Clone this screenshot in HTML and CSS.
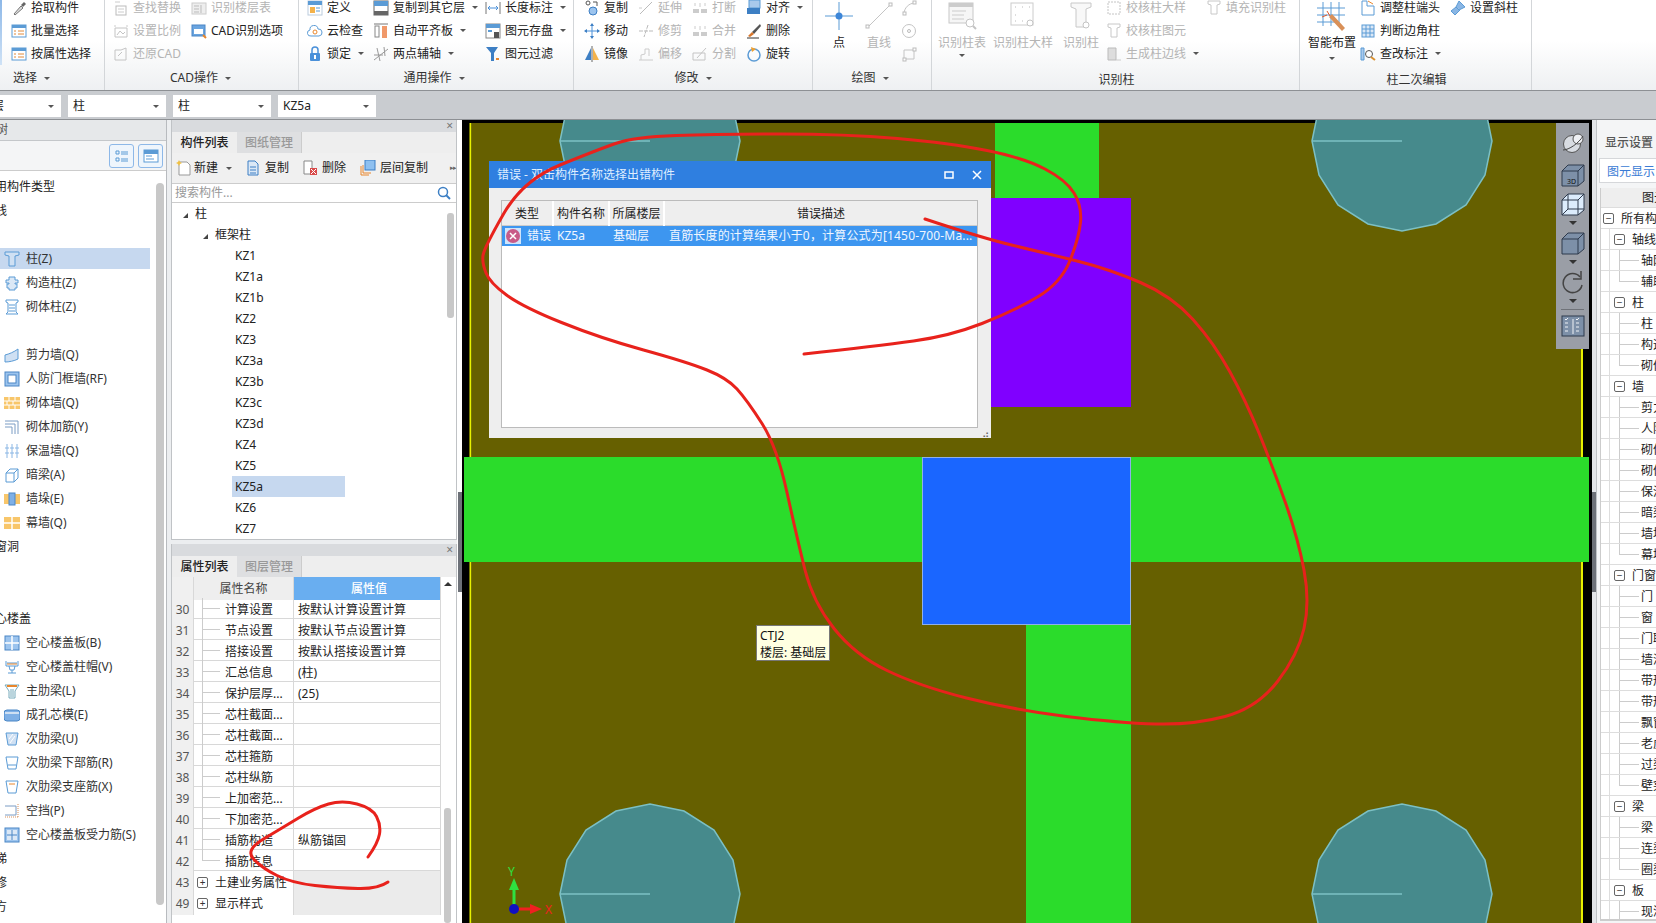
FILE: index.html
```html
<!DOCTYPE html>
<html lang="zh-CN">
<head>
    <meta charset="UTF-8">
    <title>构件错误</title>
    <link rel="stylesheet" href="styles.css">
</head>
<body>

<svg class="defs" width="0" height="0">
    <symbol id="i-list" viewBox="0 0 16 16"><rect x="1" y="2" width="14" height="12" fill="#fff" stroke="#5b9bd5"/><rect x="1" y="2" width="14" height="3" fill="#5b9bd5"/><path d="M3 8h2M7 8h6M3 11h2M7 11h6" stroke="#e08a3c"/></symbol>
    <symbol id="i-pick" viewBox="0 0 16 16"><path d="M3 14 10 6l2 2-8 7z" fill="#ddd" stroke="#777"/><path d="M10 5l3-3 2 2-3 3z" fill="#666"/></symbol>
    <symbol id="i-gfind" viewBox="0 0 16 16"><rect x="3" y="6" width="10" height="9" fill="none" stroke="#bbb"/><path d="M5 9h6M5 12h6M2 2h5" stroke="#ccc"/></symbol>
    <symbol id="i-gscale" viewBox="0 0 16 16"><path d="M2 14V5h12v9zM4 12l3-4 3 3 2-2" fill="none" stroke="#c4c4c4"/><path d="M2 2v2M14 2v2" stroke="#ccc"/></symbol>
    <symbol id="i-grestore" viewBox="0 0 16 16"><path d="M2 14V4h6l5-2v12z" fill="none" stroke="#c4c4c4"/><path d="M5 10l4-4" stroke="#c4c4c4"/></symbol>
    <symbol id="i-gfloor" viewBox="0 0 16 16"><rect x="1" y="3" width="14" height="11" fill="#eee" stroke="#ccc"/><path d="M3 6h5M3 9h5M3 12h5M10 5v8" stroke="#bbb"/></symbol>
    <symbol id="i-cad" viewBox="0 0 16 16"><rect x="1" y="2" width="13" height="11" fill="#6aa5e0" stroke="#4a86c5"/><rect x="3" y="6" width="9" height="5" fill="#fff"/><path d="M12 12l3 3" stroke="#e8862c" stroke-width="2"/></symbol>
    <symbol id="i-define" viewBox="0 0 16 16"><rect x="1" y="1" width="14" height="14" fill="#fff" stroke="#bcd"/><rect x="1" y="1" width="14" height="4" fill="#5b9bd5"/><rect x="3" y="7" width="5" height="6" fill="#f4b24a"/><path d="M9 8h4M9 11h4" stroke="#5b9bd5"/></symbol>
    <symbol id="i-cloud" viewBox="0 0 16 16"><path d="M4 13a3 3 0 0 1-1-6 4 4 0 0 1 8-1 3.500 3.500 0 0 1 1 7z" fill="#fff" stroke="#5b9bd5"/><circle cx="8" cy="9" r="2" fill="none" stroke="#e8862c"/></symbol>
    <symbol id="i-lock" viewBox="0 0 16 16"><rect x="3" y="7" width="10" height="8" rx="1" fill="#4a90d9"/><path d="M5 7V4a3 3 0 0 1 6 0v3" fill="none" stroke="#4a90d9" stroke-width="1.500"/><rect x="7" y="9" width="2" height="4" fill="#fff"/></symbol>
    <symbol id="i-copyto" viewBox="0 0 16 16"><rect x="1" y="1" width="14" height="14" fill="#fff" stroke="#666"/><rect x="1" y="1" width="14" height="5" fill="#5b9bd5"/><rect x="1" y="11" width="14" height="4" fill="#666"/></symbol>
    <symbol id="i-align" viewBox="0 0 16 16"><path d="M1 1h14" stroke="#777"/><rect x="2" y="3" width="4" height="11" fill="#fff" stroke="#888"/><rect x="9" y="3" width="5" height="12" fill="#f0996a"/></symbol>
    <symbol id="i-axis" viewBox="0 0 16 16"><path d="M1 14 15 3M4 2l3 13M11 1l1 9M1 9h9" fill="none" stroke="#999"/></symbol>
    <symbol id="i-length" viewBox="0 0 16 16"><path d="M1 2v12M15 2v12" stroke="#777"/><path d="M3 8h10M3 8l2-2M3 8l2 2M13 8l-2-2M13 8l-2 2" stroke="#4a90d9" fill="none"/></symbol>
    <symbol id="i-store" viewBox="0 0 16 16"><rect x="1" y="1" width="14" height="14" fill="#fff" stroke="#888"/><rect x="1" y="1" width="14" height="4" fill="#5b9bd5"/><rect x="3" y="7" width="4" height="2" fill="#5b9bd5"/><rect x="9" y="9" width="5" height="6" fill="#555"/></symbol>
    <symbol id="i-filter" viewBox="0 0 16 16"><path d="M1 1h12L9 7v8H6V7z" fill="#3d7fc4"/><path d="M11 13h3" stroke="#e8862c" stroke-width="2"/></symbol>
    <symbol id="i-copy" viewBox="0 0 16 16"><circle cx="4" cy="3" r="2" fill="none" stroke="#555"/><circle cx="9" cy="11" r="4" fill="#9cc4ee" stroke="#3d7fc4"/><path d="M9 2h4v4" fill="none" stroke="#555"/></symbol>
    <symbol id="i-move" viewBox="0 0 16 16"><path d="M8 1v14M1 8h14" stroke="#4a90d9"/><path d="M8 0l-2 3h4zM8 16l-2-3h4zM0 8l3-2v4zM16 8l-3-2v4z" fill="#3d7fc4"/></symbol>
    <symbol id="i-mirror" viewBox="0 0 16 16"><path d="M1 14 7 2v12z" fill="#3d7fc4"/><path d="M9 2l6 12H9z" fill="#f4b24a"/><path d="M8 0v16" stroke="#666"/></symbol>
    <symbol id="i-gext" viewBox="0 0 16 16"><path d="M2 14 14 2" stroke="#bbb"/><path d="M1 8h3" stroke="#ccc"/></symbol>
    <symbol id="i-gtrim" viewBox="0 0 16 16"><path d="M1 8h14M10 2 6 14" stroke="#bbb" stroke-dasharray="4 1"/></symbol>
    <symbol id="i-goff" viewBox="0 0 16 16"><path d="M1 14h14M3 14V9l4-1V3h4v7" fill="none" stroke="#ccc"/></symbol>
    <symbol id="i-gbreak" viewBox="0 0 16 16"><rect x="1" y="9" width="6" height="4" fill="#ccc"/><rect x="9" y="9" width="6" height="4" fill="#ccc"/><path d="M3 3v3M13 3v3M8 3v4" stroke="#ccc"/></symbol>
    <symbol id="i-gsplit" viewBox="0 0 16 16"><path d="M1 14V7h12v7zM5 12 14 2" fill="none" stroke="#c4c4c4"/></symbol>
    <symbol id="i-alignr" viewBox="0 0 16 16"><rect x="3" y="0" width="11" height="8" fill="#a9c9ec" stroke="#5b9bd5"/><rect x="1" y="8" width="13" height="6" fill="#3d7fc4"/></symbol>
    <symbol id="i-del" viewBox="0 0 16 16"><path d="M14 1 6 9l2 2 7-8z" fill="#555"/><path d="M6 9 2 13l2 1 4-3z" fill="#d8772c"/><path d="M1 15h12" stroke="#333"/></symbol>
    <symbol id="i-rotate" viewBox="0 0 16 16"><circle cx="8" cy="9" r="6" fill="none" stroke="#5b9bd5" stroke-width="1.500"/><path d="M5 1l5 2-4 3z" fill="#f0a030"/></symbol>
    <symbol id="i-point" viewBox="0 0 32 32"><path d="M16 2v28M2 16h28" stroke="#5b9bd5"/><circle cx="16" cy="16" r="3.500" fill="#3d86d8"/></symbol>
    <symbol id="i-line" viewBox="0 0 32 32"><path d="M5 27 27 5" stroke="#c4c4c4"/><rect x="3" y="25" width="3" height="3" fill="#fff" stroke="#bbb"/><rect x="26" y="3" width="3" height="3" fill="#fff" stroke="#bbb"/></symbol>
    <symbol id="i-garc" viewBox="0 0 16 16"><path d="M3 14C3 8 8 3 14 3" fill="none" stroke="#c4c4c4"/><rect x="2" y="12" width="3" height="3" fill="#fff" stroke="#bbb"/><rect x="12" y="1" width="3" height="3" fill="#fff" stroke="#bbb"/></symbol>
    <symbol id="i-gcircle" viewBox="0 0 16 16"><circle cx="8" cy="8" r="6.500" fill="none" stroke="#c4c4c4"/><circle cx="8" cy="8" r="1.500" fill="none" stroke="#bbb"/></symbol>
    <symbol id="i-grect" viewBox="0 0 16 16"><path d="M3 4h10v9H3z" fill="none" stroke="#c4c4c4"/><rect x="12" y="2" width="3" height="3" fill="#fff" stroke="#bbb"/><rect x="2" y="12" width="3" height="3" fill="#fff" stroke="#bbb"/></symbol>
    <symbol id="i-rtable" viewBox="0 0 32 32"><rect x="3" y="3" width="24" height="20" fill="#f6f6f6" stroke="#c8c8c8"/><rect x="3" y="3" width="24" height="4" fill="#ccc"/><path d="M6 11h14M6 15h12M6 19h12" stroke="#ccc"/><circle cx="24" cy="23" r="4" fill="#fff" stroke="#c4c4c4"/><path d="M27 26l3 3" stroke="#c4c4c4" stroke-width="2"/></symbol>
    <symbol id="i-rdetail" viewBox="0 0 32 32"><rect x="4" y="3" width="22" height="22" fill="none" stroke="#ccc"/><path d="M8 7h1M15 7h1M22 7h1M8 15h1M8 21h1M15 21h1" stroke="#bbb"/><circle cx="23" cy="23" r="3" fill="#fff" stroke="#c4c4c4"/></symbol>
    <symbol id="i-rcol" viewBox="0 0 32 32"><path d="M6 3h20v4l-5 2v18H11V9L6 7z" fill="#f8f8f8" stroke="#c8c8c8"/><circle cx="21" cy="25" r="3" fill="#fff" stroke="#c4c4c4"/></symbol>
    <symbol id="i-gcol" viewBox="0 0 16 16"><path d="M2 1h12v3l-3 1v9H5V5L2 4z" fill="none" stroke="#c8c8c8"/></symbol>
    <symbol id="i-gdash" viewBox="0 0 16 16"><rect x="2" y="2" width="12" height="12" fill="none" stroke="#c4c4c4" stroke-dasharray="2 1"/></symbol>
    <symbol id="i-gedge" viewBox="0 0 16 16"><path d="M2 2h8v12H2z" fill="#ddd" stroke="#bbb"/><path d="M10 14h5" stroke="#ccc"/></symbol>
    <symbol id="i-smart" viewBox="0 0 32 32"><path d="M7 2v24M15 2v24M23 2v24M1 8h28M1 15h28M1 22h20" stroke="#5b9bd5"/><path d="M16 14l13 14-3 3L13 17z" fill="#d99058"/><path d="M11 11l3 5M6 17l5-2" stroke="#e05a2c"/></symbol>
    <symbol id="i-adjust" viewBox="0 0 16 16"><path d="M2 1v14h12V6H7V1z" fill="#fff" stroke="#5b9bd5"/><path d="M8 1l5 3" stroke="#e8862c"/></symbol>
    <symbol id="i-corner" viewBox="0 0 16 16"><rect x="2" y="2" width="12" height="12" fill="#dbe8f6" stroke="#5b9bd5"/><path d="M6 2v12M10 2v12M2 6h12M2 10h12" stroke="#5b9bd5"/></symbol>
    <symbol id="i-edit" viewBox="0 0 16 16"><path d="M1 2h3v12H1z" fill="#a9c9ec" stroke="#5b9bd5"/><circle cx="9" cy="8" r="3.500" fill="#fff" stroke="#555"/><path d="M11 11l4 3" stroke="#d99030" stroke-width="2"/></symbol>
    <symbol id="i-slant" viewBox="0 0 16 16"><path d="M9 1l6 6-6 3-3-3zM6 7l-5 4 4 4 5-5" fill="#8ab6e4" stroke="#5b9bd5"/></symbol>
    <symbol id="i-col" viewBox="0 0 16 16"><path d="M1 1h14v3l-4 1v10H5V5L1 4z" fill="#cfe0f3" stroke="#5b9bd5"/></symbol>
    <symbol id="i-gz" viewBox="0 0 16 16"><path d="M5 2h6v3h3v3h-3v1h2v4h-2v2H5v-2H3V9h2V8H2V5h3z" fill="#dbe8f6" stroke="#5b9bd5"/></symbol>
    <symbol id="i-mcol" viewBox="0 0 16 16"><path d="M2 1h12v2l-2 1v9l2 2H2l2-2V4L2 3z" fill="#fff" stroke="#5b9bd5"/><path d="M5 6h6M5 9h6M5 12h6" stroke="#5b9bd5"/></symbol>
    <symbol id="i-shear" viewBox="0 0 16 16"><path d="M1 8c4-1 9-3 13-6v10c-4 2-9 3-13 3z" fill="#cfe0f3" stroke="#5b9bd5"/></symbol>
    <symbol id="i-door" viewBox="0 0 16 16"><rect x="1" y="1" width="14" height="14" fill="#9cc4ee" stroke="#4a86c5"/><rect x="4" y="4" width="8" height="8" fill="#fff" stroke="#4a86c5"/></symbol>
    <symbol id="i-brick" viewBox="0 0 16 16"><rect x="0" y="2" width="16" height="12" fill="#f8c66a"/><path d="M0 6h16M0 10h16M5 2v4M11 2v4M3 6v4M9 6v4M5 10v4M11 10v4" stroke="#fff"/></symbol>
    <symbol id="i-rebar" viewBox="0 0 16 16"><path d="M1 2h13v13M1 5h10v10M1 8h7v7" fill="none" stroke="#7a9cc4"/></symbol>
    <symbol id="i-insu" viewBox="0 0 16 16"><path d="M3 1v14M8 1v14M13 1v14M1 5h4M6 5h4M11 5h4M1 10h4M6 10h4M11 10h4" stroke="#8ab6e4"/></symbol>
    <symbol id="i-beam" viewBox="0 0 16 16"><path d="M2 6 6 2h8v9l-4 4H2z" fill="#fff" stroke="#5b9bd5"/><path d="M2 6h8v9M10 6l4-4" fill="none" stroke="#5b9bd5"/></symbol>
    <symbol id="i-pier" viewBox="0 0 16 16"><rect x="0" y="3" width="16" height="10" fill="#f8c66a"/><rect x="5" y="2" width="6" height="12" fill="#7fb0e6" stroke="#4a86c5"/></symbol>
    <symbol id="i-curtain" viewBox="0 0 16 16"><rect x="0" y="2" width="16" height="12" fill="#f8c66a"/><path d="M8 2v12M0 8h16" stroke="#fff" stroke-width="1.500"/></symbol>
    <symbol id="i-slab" viewBox="0 0 16 16"><rect x="1" y="1" width="14" height="14" fill="#9cc4ee" stroke="#4a86c5"/><path d="M8 1v14M1 8h14" stroke="#fff" stroke-width="1.500"/></symbol>
    <symbol id="i-cap" viewBox="0 0 16 16"><path d="M2 2v5h12V2M5 7l1 4h4l1-4M4 14h8M8 11v3M3 4h10" fill="none" stroke="#5b9bd5"/><path d="M3 5h10" stroke="#e8862c"/></symbol>
    <symbol id="i-rib" viewBox="0 0 16 16"><path d="M1 2h14l-4 6v7H5V8z" fill="#fff" stroke="#7ab"/><path d="M3 3h10" stroke="#e8862c" stroke-width="2"/><path d="M7 6v8M9 6v8" stroke="#7ab"/></symbol>
    <symbol id="i-mold" viewBox="0 0 16 16"><rect x="0" y="3" width="16" height="11" rx="3" fill="#7fb0e6" stroke="#4a86c5"/><path d="M1 6h14" stroke="#cfe0f3" stroke-width="2"/></symbol>
    <symbol id="i-rib2" viewBox="0 0 16 16"><path d="M2 2h12l-2 12H4z" fill="#cfe0f3" stroke="#5b9bd5"/><path d="M5 8l4-5M6 12l5-7" stroke="#fff"/></symbol>
    <symbol id="i-rib3" viewBox="0 0 16 16"><path d="M2 2h12l-2 12H4z" fill="#fff" stroke="#5b9bd5"/><path d="M4 10h8" stroke="#5b9bd5"/></symbol>
    <symbol id="i-rib4" viewBox="0 0 16 16"><path d="M2 2h12l-2 12H4z" fill="#fff" stroke="#5b9bd5"/><path d="M5 5h6" stroke="#e8862c"/></symbol>
    <symbol id="i-gap" viewBox="0 0 16 16"><path d="M1 3h11v9H1" fill="none" stroke="#7a9cc4"/><path d="M14 1v14M1 14h13" stroke="#d99058" stroke-dasharray="1 1"/></symbol>
    <symbol id="i-slabr" viewBox="0 0 16 16"><rect x="1" y="1" width="14" height="14" fill="#9cc4ee" stroke="#4a86c5"/><rect x="3" y="3" width="10" height="10" fill="#dbe8f6"/><path d="M8 3v10M3 8h10" stroke="#4a86c5"/></symbol>
    <symbol id="i-new" viewBox="0 0 16 16"><path d="M3 2h8l3 3v10H3z" fill="#fff" stroke="#999"/><path d="M3 0l1 2 2 1-2 1-1 2-1-2-2-1 2-1z" fill="#f0c040"/></symbol>
    <symbol id="i-dup" viewBox="0 0 16 16"><path d="M3 1h7l3 3v11H3z" fill="#dbe8f6" stroke="#3d7fc4"/><path d="M5 7h6M5 10h6M5 13h6" stroke="#3d7fc4"/></symbol>
    <symbol id="i-rem" viewBox="0 0 16 16"><path d="M2 1h8v13H2z" fill="#fff" stroke="#888"/><rect x="8" y="8" width="7" height="7" fill="#d84a4a"/><path d="M9 9l5 5M14 9l-5 5" stroke="#fff"/></symbol>
    <symbol id="i-floorcopy" viewBox="0 0 16 16"><path d="M1 6v9h8M3 5v8h8" fill="none" stroke="#e8862c"/><rect x="5" y="0" width="10" height="10" fill="#8ec0f0" stroke="#3d7fc4"/></symbol>
    <symbol id="i-search" viewBox="0 0 16 16"><circle cx="7" cy="7" r="4.500" fill="none" stroke="#3d7fc4" stroke-width="1.500"/><path d="M10 10l4 4" stroke="#3d7fc4" stroke-width="2"/></symbol>
    <symbol id="i-view1" viewBox="0 0 16 16"><path d="M2 3h3v3H2zM2 10h3v3H2zM7 4h7M7 6h7M7 11h7M7 13h7" fill="none" stroke="#5b9bd5"/></symbol>
    <symbol id="i-view2" viewBox="0 0 16 16"><rect x="1" y="2" width="14" height="12" fill="#fff" stroke="#5b9bd5"/><rect x="1" y="2" width="14" height="4" fill="#5b9bd5"/><path d="M3 8h6M3 11h8" stroke="#5b9bd5"/></symbol>
    <symbol id="i-orbit" viewBox="0 0 24 24"><circle cx="11" cy="13" r="8.500" fill="#d8dce2" stroke="#555"/><circle cx="17" cy="8" r="5" fill="#eef0f4" stroke="#555"/><path d="M2 19C8 19 18 12 22 5" fill="none" stroke="#444"/></symbol>
    <symbol id="i-cube" viewBox="0 0 24 24"><path d="M1 8 7 2h16v16l-6 5H1z" fill="#7d90a8" stroke="#2e3a4c"/><path d="M1 8h16v15M17 8l6-6" fill="none" stroke="#2e3a4c"/></symbol>
    <symbol id="i-cube3d" viewBox="0 0 24 24"><path d="M1 8 7 2h16v16l-6 5H1z" fill="#7d90a8" stroke="#2e3a4c"/><path d="M1 8h16v15M17 8l6-6" fill="none" stroke="#2e3a4c"/><text x="6" y="21" class="cube-label">3D</text></symbol>
    <symbol id="i-cubew" viewBox="0 0 24 24"><path d="M1 8 7 2h16v16l-6 5H1z" fill="#dcecfc" stroke="#2e3a4c"/><path d="M1 8h16v15M17 8l6-6M7 2v15h16M7 17l-6 6" fill="none" stroke="#2e3a4c"/></symbol>
    <symbol id="i-turn" viewBox="0 0 24 24"><path d="M19 7A9.500 9.500 0 1 0 21 15" fill="none" stroke="#444" stroke-width="1.500"/><path d="M20 1v8h-8" fill="none" stroke="#444" stroke-width="1.500"/></symbol>
    <symbol id="i-checks" viewBox="0 0 24 24"><rect x="1" y="2" width="22" height="20" fill="#7d90a8" stroke="#2e3a4c"/><path d="M12 5v15M4 9h3M15 9h3M4 13h3M15 13h3M4 17h3M15 17h3M4 5l1 1 2-2M15 5l1 1 2-2" fill="none" stroke="#f0f2f6"/></symbol>
</svg>

<header class="ribbon">
    <section class="group g-select">
        <div class="group-body">
            <div class="col">
                <div class="tool"><svg class="ic"><use href="#i-pick"/></svg>拾取构件</div>
                <div class="tool"><svg class="ic"><use href="#i-list"/></svg>批量选择</div>
                <div class="tool"><svg class="ic"><use href="#i-list"/></svg>按属性选择</div>
            </div>
        </div>
        <div class="group-label label-left">选择<i class="arrow"></i></div>
    </section>
    <section class="group g-cad">
        <div class="group-body">
            <div class="col w78">
                <div class="tool off"><svg class="ic"><use href="#i-gfind"/></svg>查找替换</div>
                <div class="tool off"><svg class="ic"><use href="#i-gscale"/></svg>设置比例</div>
                <div class="tool off"><svg class="ic"><use href="#i-grestore"/></svg>还原CAD</div>
            </div>
            <div class="col">
                <div class="tool off"><svg class="ic"><use href="#i-gfloor"/></svg>识别楼层表</div>
                <div class="tool"><svg class="ic"><use href="#i-cad"/></svg>CAD识别选项</div>
            </div>
        </div>
        <div class="group-label">CAD操作<i class="arrow"></i></div>
    </section>
    <section class="group g-common">
        <div class="group-body">
            <div class="col w66">
                <div class="tool"><svg class="ic"><use href="#i-define"/></svg>定义</div>
                <div class="tool"><svg class="ic"><use href="#i-cloud"/></svg>云检查</div>
                <div class="tool"><svg class="ic"><use href="#i-lock"/></svg>锁定<i class="arrow"></i></div>
            </div>
            <div class="col w112">
                <div class="tool"><svg class="ic"><use href="#i-copyto"/></svg>复制到其它层<i class="arrow"></i></div>
                <div class="tool"><svg class="ic"><use href="#i-align"/></svg>自动平齐板<i class="arrow"></i></div>
                <div class="tool"><svg class="ic"><use href="#i-axis"/></svg>两点辅轴<i class="arrow"></i></div>
            </div>
            <div class="col">
                <div class="tool"><svg class="ic"><use href="#i-length"/></svg>长度标注<i class="arrow"></i></div>
                <div class="tool"><svg class="ic"><use href="#i-store"/></svg>图元存盘<i class="arrow"></i></div>
                <div class="tool"><svg class="ic"><use href="#i-filter"/></svg>图元过滤</div>
            </div>
        </div>
        <div class="group-label">通用操作<i class="arrow"></i></div>
    </section>
    <section class="group g-modify">
        <div class="group-body">
            <div class="col w54">
                <div class="tool"><svg class="ic"><use href="#i-copy"/></svg>复制</div>
                <div class="tool"><svg class="ic"><use href="#i-move"/></svg>移动</div>
                <div class="tool"><svg class="ic"><use href="#i-mirror"/></svg>镜像</div>
            </div>
            <div class="col w54">
                <div class="tool off"><svg class="ic"><use href="#i-gext"/></svg>延伸</div>
                <div class="tool off"><svg class="ic"><use href="#i-gtrim"/></svg>修剪</div>
                <div class="tool off"><svg class="ic"><use href="#i-goff"/></svg>偏移</div>
            </div>
            <div class="col w54">
                <div class="tool off"><svg class="ic"><use href="#i-gbreak"/></svg>打断</div>
                <div class="tool off"><svg class="ic"><use href="#i-gbreak"/></svg>合并</div>
                <div class="tool off"><svg class="ic"><use href="#i-gsplit"/></svg>分割</div>
            </div>
            <div class="col">
                <div class="tool"><svg class="ic"><use href="#i-alignr"/></svg>对齐<i class="arrow"></i></div>
                <div class="tool"><svg class="ic"><use href="#i-del"/></svg>删除</div>
                <div class="tool"><svg class="ic"><use href="#i-rotate"/></svg>旋转</div>
            </div>
        </div>
        <div class="group-label">修改<i class="arrow"></i></div>
    </section>
    <section class="group g-draw">
        <div class="group-body">
            <div class="big w40">
                <svg class="ic-big"><use href="#i-point"/></svg>
                <span>点</span>
            </div>
            <div class="big w40 off">
                <svg class="ic-big"><use href="#i-line"/></svg>
                <span>直线</span>
            </div>
            <div class="col small-col">
                <div class="tool off"><svg class="ic"><use href="#i-garc"/></svg></div>
                <div class="tool off"><svg class="ic"><use href="#i-gcircle"/></svg></div>
                <div class="tool off"><svg class="ic"><use href="#i-grect"/></svg></div>
            </div>
        </div>
        <div class="group-label">绘图<i class="arrow"></i></div>
    </section>
    <section class="group g-recog">
        <div class="group-body">
            <div class="big w56 off">
                <svg class="ic-big"><use href="#i-rtable"/></svg>
                <span>识别柱表</span>
                <i class="arrow"></i>
            </div>
            <div class="big w66 off">
                <svg class="ic-big"><use href="#i-rdetail"/></svg>
                <span>识别柱大样</span>
            </div>
            <div class="big w50 off">
                <svg class="ic-big"><use href="#i-rcol"/></svg>
                <span>识别柱</span>
            </div>
            <div class="col w100">
                <div class="tool off"><svg class="ic"><use href="#i-gdash"/></svg>校核柱大样</div>
                <div class="tool off"><svg class="ic"><use href="#i-gcol"/></svg>校核柱图元</div>
                <div class="tool off"><svg class="ic"><use href="#i-gedge"/></svg>生成柱边线<i class="arrow"></i></div>
            </div>
            <div class="col">
                <div class="tool off"><svg class="ic"><use href="#i-gcol"/></svg>填充识别柱</div>
            </div>
        </div>
        <div class="group-label label-low">识别柱</div>
    </section>
    <section class="group g-edit">
        <div class="group-body">
            <div class="big w56">
                <svg class="ic-big"><use href="#i-smart"/></svg>
                <span>智能布置</span>
                <i class="arrow arrow-low"></i>
            </div>
            <div class="col w90">
                <div class="tool"><svg class="ic"><use href="#i-adjust"/></svg>调整柱端头</div>
                <div class="tool"><svg class="ic"><use href="#i-corner"/></svg>判断边角柱</div>
                <div class="tool"><svg class="ic"><use href="#i-edit"/></svg>查改标注<i class="arrow"></i></div>
            </div>
            <div class="col">
                <div class="tool"><svg class="ic"><use href="#i-slant"/></svg>设置斜柱</div>
            </div>
        </div>
        <div class="group-label label-low">柱二次编辑</div>
    </section>
</header>

<div class="toolbar">
    <div class="combo combo-first"><span class="combo-cut">基础层</span><i class="arrow"></i></div>
    <div class="combo"><span>柱</span><i class="arrow"></i></div>
    <div class="combo"><span>柱</span><i class="arrow"></i></div>
    <div class="combo"><span>KZ5a</span><i class="arrow"></i></div>
</div>

<main class="workspace">
    <aside class="nav">
        <div class="nav-title"><span>导航树</span></div>
        <div class="nav-tools">
            <button class="view-btn"><svg class="ic"><use href="#i-view1"/></svg></button>
            <button class="view-btn"><svg class="ic"><use href="#i-view2"/></svg></button>
        </div>
        <div class="nav-body">
            <div class="nav-list">
                <div class="nav-head">常用构件类型</div>
                <div class="nav-head">轴线</div>
                <div class="nav-head">&nbsp;</div>
                <div class="nav-item sel"><svg class="ic"><use href="#i-col"/></svg>柱(Z)</div>
                <div class="nav-item"><svg class="ic"><use href="#i-gz"/></svg>构造柱(Z)</div>
                <div class="nav-item"><svg class="ic"><use href="#i-mcol"/></svg>砌体柱(Z)</div>
                <div class="nav-head">&nbsp;</div>
                <div class="nav-item"><svg class="ic"><use href="#i-shear"/></svg>剪力墙(Q)</div>
                <div class="nav-item"><svg class="ic"><use href="#i-door"/></svg>人防门框墙(RF)</div>
                <div class="nav-item"><svg class="ic"><use href="#i-brick"/></svg>砌体墙(Q)</div>
                <div class="nav-item"><svg class="ic"><use href="#i-rebar"/></svg>砌体加筋(Y)</div>
                <div class="nav-item"><svg class="ic"><use href="#i-insu"/></svg>保温墙(Q)</div>
                <div class="nav-item"><svg class="ic"><use href="#i-beam"/></svg>暗梁(A)</div>
                <div class="nav-item"><svg class="ic"><use href="#i-pier"/></svg>墙垛(E)</div>
                <div class="nav-item"><svg class="ic"><use href="#i-curtain"/></svg>幕墙(Q)</div>
                <div class="nav-head">门窗洞</div>
                <div class="nav-head">&nbsp;</div>
                <div class="nav-head">&nbsp;</div>
                <div class="nav-head">空心楼盖</div>
                <div class="nav-item"><svg class="ic"><use href="#i-slab"/></svg>空心楼盖板(B)</div>
                <div class="nav-item"><svg class="ic"><use href="#i-cap"/></svg>空心楼盖柱帽(V)</div>
                <div class="nav-item"><svg class="ic"><use href="#i-rib"/></svg>主肋梁(L)</div>
                <div class="nav-item"><svg class="ic"><use href="#i-mold"/></svg>成孔芯模(E)</div>
                <div class="nav-item"><svg class="ic"><use href="#i-rib2"/></svg>次肋梁(U)</div>
                <div class="nav-item"><svg class="ic"><use href="#i-rib3"/></svg>次肋梁下部筋(R)</div>
                <div class="nav-item"><svg class="ic"><use href="#i-rib4"/></svg>次肋梁支座筋(X)</div>
                <div class="nav-item"><svg class="ic"><use href="#i-gap"/></svg>空挡(P)</div>
                <div class="nav-item"><svg class="ic"><use href="#i-slabr"/></svg>空心楼盖板受力筋(S)</div>
                <div class="nav-head">楼梯</div>
                <div class="nav-head">装修</div>
                <div class="nav-head">土方</div>
            </div>
            <div class="nav-scroll"></div>
        </div>
    </aside>

    <div class="splitter"></div>

    <div class="middle">
        <section class="pane pane-list">
            <div class="pane-strip">×</div>
            <div class="tabs">
                <div class="tab active">构件列表</div>
                <div class="tab">图纸管理</div>
            </div>
            <div class="list-tools">
                <span class="ltool tool-new"><svg class="ic"><use href="#i-new"/></svg>新建<i class="arrow"></i></span>
                <span class="ltool tool-dup"><svg class="ic"><use href="#i-dup"/></svg>复制</span>
                <span class="ltool tool-rem"><svg class="ic"><use href="#i-rem"/></svg>删除</span>
                <span class="ltool tool-floor"><svg class="ic"><use href="#i-floorcopy"/></svg>层间复制</span>
                <span class="more">▸▸</span>
            </div>
            <div class="search">
                <span>搜索构件...</span>
                <svg class="ic"><use href="#i-search"/></svg>
            </div>
            <div class="tree-wrap">
                <div class="tree">
                    <div class="node n0"><i class="tri"></i>柱</div>
                    <div class="node n1"><i class="tri"></i>框架柱</div>
                    <div class="node leaf">KZ1</div>
                    <div class="node leaf">KZ1a</div>
                    <div class="node leaf">KZ1b</div>
                    <div class="node leaf">KZ2</div>
                    <div class="node leaf">KZ3</div>
                    <div class="node leaf">KZ3a</div>
                    <div class="node leaf">KZ3b</div>
                    <div class="node leaf">KZ3c</div>
                    <div class="node leaf">KZ3d</div>
                    <div class="node leaf">KZ4</div>
                    <div class="node leaf">KZ5</div>
                    <div class="node leaf sel">KZ5a</div>
                    <div class="node leaf">KZ6</div>
                    <div class="node leaf">KZ7</div>
                </div>
                <div class="tree-scroll"><div class="tree-thumb"></div></div>
            </div>
        </section>

        <section class="pane pane-props">
            <div class="pane-strip">×</div>
            <div class="tabs">
                <div class="tab active">属性列表</div>
                <div class="tab">图层管理</div>
            </div>
            <div class="props-wrap">
                <div class="props">
                    <div class="prow head"><div class="pnum"></div><div class="pname">属性名称</div><div class="pval">属性值</div></div>
                    <div class="prow"><div class="pnum">30</div><div class="pname">计算设置</div><div class="pval">按默认计算设置计算</div></div>
                    <div class="prow"><div class="pnum">31</div><div class="pname">节点设置</div><div class="pval">按默认节点设置计算</div></div>
                    <div class="prow"><div class="pnum">32</div><div class="pname">搭接设置</div><div class="pval">按默认搭接设置计算</div></div>
                    <div class="prow"><div class="pnum">33</div><div class="pname">汇总信息</div><div class="pval">(柱)</div></div>
                    <div class="prow"><div class="pnum">34</div><div class="pname">保护层厚...</div><div class="pval">(25)</div></div>
                    <div class="prow"><div class="pnum">35</div><div class="pname">芯柱截面...</div><div class="pval"></div></div>
                    <div class="prow"><div class="pnum">36</div><div class="pname">芯柱截面...</div><div class="pval"></div></div>
                    <div class="prow"><div class="pnum">37</div><div class="pname">芯柱箍筋</div><div class="pval"></div></div>
                    <div class="prow"><div class="pnum">38</div><div class="pname">芯柱纵筋</div><div class="pval"></div></div>
                    <div class="prow"><div class="pnum">39</div><div class="pname">上加密范...</div><div class="pval"></div></div>
                    <div class="prow"><div class="pnum">40</div><div class="pname">下加密范...</div><div class="pval"></div></div>
                    <div class="prow"><div class="pnum">41</div><div class="pname">插筋构造</div><div class="pval">纵筋锚固</div></div>
                    <div class="prow last"><div class="pnum">42</div><div class="pname">插筋信息</div><div class="pval"></div></div>
                    <div class="prow fold"><div class="pnum">43</div><div class="pname"><i class="box">+</i>土建业务属性</div><div class="pval"></div></div>
                    <div class="prow fold"><div class="pnum">49</div><div class="pname"><i class="box">+</i>显示样式</div><div class="pval"></div></div>
                </div>
                <div class="props-scroll">
                    <i class="up"></i>
                    <div class="props-thumb"></div>
                </div>
            </div>
        </section>
    </div>

    <div class="splitter splitter-dark"><div class="handle"></div></div>

    <div class="canvas">
        <svg class="drawing" viewBox="462 120 1130 803" width="1130" height="803">
            <rect x="462" y="120" width="1130" height="803" fill="#000"/>
            <rect x="472" y="123" width="1110" height="800" fill="#666000"/>
            <path d="M470.500 123V923M1582 123V923" stroke="#e8f000" stroke-width="2"/>
            <g fill="#468a8c" stroke="#7cc0c4" stroke-width="1.500">
                <polygon points="560,141 567,107 586,77 616,58 650,51 684,58 714,77 733,107 740,141 733,175 714,205 684,224 650,231 616,224 586,205 567,175"/>
                <path d="M560 141H650"/>
                <polygon points="1312,141 1319,107 1338,77 1368,58 1402,51 1436,58 1466,77 1485,107 1492,141 1485,175 1466,205 1436,224 1402,231 1368,224 1338,205 1319,175"/>
                <path d="M1312 141H1402"/>
                <polygon points="560,894 567,860 586,830 616,811 650,804 684,811 714,830 733,860 740,894 733,928 714,958 684,977 650,984 616,977 586,958 567,928"/>
                <path d="M560 894H650"/>
                <polygon points="1312,894 1319,860 1338,830 1368,811 1402,804 1436,811 1466,830 1485,860 1492,894 1485,928 1466,958 1436,977 1402,984 1368,977 1338,958 1319,928"/>
                <path d="M1312 894H1402"/>
            </g>
            <rect x="995" y="123" width="104" height="80" fill="#2bdc2b"/>
            <rect x="980" y="198" width="151" height="209" fill="#8000ff"/>
            <rect x="464" y="457" width="1125" height="105" fill="#2bdc2b"/>
            <rect x="1026" y="624" width="105" height="299" fill="#2bdc2b"/>
            <rect x="922.500" y="457.500" width="208" height="167" fill="#1a66ff" stroke="#8fb0e8"/>
            <path d="M514 909V890" stroke="#2fe040" stroke-width="3"/>
            <path d="M514 878l-5 12h10z" fill="#2fe040"/>
            <path d="M514 909H532" stroke="#f02020" stroke-width="3"/>
            <path d="M542 909l-12-5v10z" fill="#f02020"/>
            <circle cx="514" cy="909" r="5" fill="#1010c0"/>
            <text x="508" y="876" class="axis-y">Y</text>
            <text x="545" y="914" class="axis-x">X</text>
        </svg>

        <div class="view-strip">
            <svg class="ic-view first"><use href="#i-orbit"/></svg>
            <svg class="ic-view"><use href="#i-cube3d"/></svg>
            <svg class="ic-view"><use href="#i-cubew"/></svg>
            <i class="arrow"></i>
            <svg class="ic-view"><use href="#i-cube"/></svg>
            <i class="arrow"></i>
            <svg class="ic-view"><use href="#i-turn"/></svg>
            <i class="arrow"></i>
            <div class="strip-sep"></div>
            <svg class="ic-view"><use href="#i-checks"/></svg>
        </div>

        <div class="dialog">
            <div class="dlg-title">
                <span>错误 - 双击构件名称选择出错构件</span>
                <svg class="dlg-btn" viewBox="0 0 12 12"><rect x="2" y="3" width="8" height="6" fill="none" stroke="#fff" stroke-width="1.500"/></svg>
                <svg class="dlg-btn" viewBox="0 0 12 12"><path d="M2 2l8 8M10 2l-8 8" stroke="#fff" stroke-width="1.500"/></svg>
            </div>
            <div class="dlg-body">
                <div class="dlg-table">
                    <div class="drow dhead">
                        <div class="dc c1">类型</div>
                        <div class="dc c2">构件名称</div>
                        <div class="dc c3">所属楼层</div>
                        <div class="dc c4">错误描述</div>
                    </div>
                    <div class="drow dsel">
                        <div class="dc c1"><svg class="err" viewBox="0 0 16 16"><rect width="16" height="16" fill="#cfe4fa"/><circle cx="8" cy="8" r="7" fill="#c85a88"/><path d="M5 5l6 6M11 5l-6 6" stroke="#fff" stroke-width="1.500"/></svg>错误</div>
                        <div class="dc c2">KZ5a</div>
                        <div class="dc c3">基础层</div>
                        <div class="dc c4">直筋长度的计算结果小于0，计算公式为[1450-700-Ma...</div>
                    </div>
                </div>
                <div class="grip">⠴</div>
            </div>
        </div>

        <div class="tip">CTJ2<br>楼层: 基础层</div>
    </div>

    <div class="splitter splitter-right"><div class="handle"></div></div>

    <aside class="display">
        <div class="display-title">显示设置</div>
        <div class="display-tab">图元显示</div>
        <div class="rtable">
            <div class="rrow rhead">图元</div>
            <div class="rrow l0"><i class="box">−</i>所有构件</div>
            <div class="rrow l1"><i class="box">−</i>轴线</div>
            <div class="rrow l2">轴网</div>
            <div class="rrow l2 end">辅助轴线</div>
            <div class="rrow l1"><i class="box">−</i>柱</div>
            <div class="rrow l2">柱</div>
            <div class="rrow l2">构造柱</div>
            <div class="rrow l2 end">砌体柱</div>
            <div class="rrow l1"><i class="box">−</i>墙</div>
            <div class="rrow l2">剪力墙</div>
            <div class="rrow l2">人防门框墙</div>
            <div class="rrow l2">砌体墙</div>
            <div class="rrow l2">砌体加筋</div>
            <div class="rrow l2">保温墙</div>
            <div class="rrow l2">暗梁</div>
            <div class="rrow l2">墙垛</div>
            <div class="rrow l2 end">幕墙</div>
            <div class="rrow l1"><i class="box">−</i>门窗洞</div>
            <div class="rrow l2">门</div>
            <div class="rrow l2">窗</div>
            <div class="rrow l2">门联窗</div>
            <div class="rrow l2">墙洞</div>
            <div class="rrow l2">带形窗</div>
            <div class="rrow l2">带形洞</div>
            <div class="rrow l2">飘窗</div>
            <div class="rrow l2">老虎窗</div>
            <div class="rrow l2">过梁</div>
            <div class="rrow l2 end">壁龛</div>
            <div class="rrow l1"><i class="box">−</i>梁</div>
            <div class="rrow l2">梁</div>
            <div class="rrow l2">连梁</div>
            <div class="rrow l2 end">圈梁</div>
            <div class="rrow l1"><i class="box">−</i>板</div>
            <div class="rrow l2">现浇板</div>
        </div>
    </aside>
</main>

<!-- red marks drawn over the whole screen -->
<svg class="marks" viewBox="0 0 1656 923" width="1656" height="923">
    <path d="M804 354Q877 346 913.500 341Q950 336 982 323.500Q1014 311 1037.500 297Q1061 283 1070 260.500Q1079 238 1080.500 222Q1082 206 1074 193Q1066 180 1045 169Q1024 158 987 150.500Q950 143 897.500 138.500Q845 134 781.500 134Q718 134 676 135.500Q634 137 615.500 143.500Q597 150 560 165Q523 180 503.500 214Q484 248 483 255.500Q482 263 486 273Q490 283 506.500 295Q523 307 561.500 322.500Q600 338 643.500 350Q687 362 707 370Q727 378 737 389Q747 400 762 423.500Q777 447 787 492.500Q797 538 805 570Q813 602 834 628.500Q855 655 887 670.500Q919 686 966.500 698Q1014 710 1066.500 716.500Q1119 723 1156 724Q1193 725 1225 716.500Q1257 708 1277.500 681.500Q1298 655 1304 628.500Q1310 602 1304 570Q1298 538 1285 501.500Q1272 465 1259 433Q1246 401 1230 372Q1214 343 1193 319.500Q1172 296 1140.500 282.500Q1109 269 1077 261Q1045 253 1013.500 245.500Q982 238 925 219"/>
    <path d="M368 857Q378 843 379.500 834Q381 825 376.500 816.500Q372 808 357 804Q342 800 328.500 804Q315 808 298.500 818Q282 828 263.500 839Q245 850 253.500 859Q262 868 277 875.500Q292 883 315 885.500Q338 888 358 888.500Q378 889 388 882"/>
</svg>

</body>
</html>
```

FILE: styles.css
```css
* {
    box-sizing: border-box;
}

html, body {
    margin: 0;
    padding: 0;
}

body {
    position: relative;
    width: 1656px;
    height: 923px;
    overflow: hidden;
    display: flex;
    flex-direction: column;
    background: #eceef0;
    color: #222;
    font-family: "Noto Sans", "Noto Sans CJK SC", sans-serif;
    font-size: 12px;
    line-height: 16px;
}

i {
    font-style: normal;
}

.defs {
    position: absolute;
}

.ic {
    width: 16px;
    height: 16px;
    flex: none;
}

.arrow {
    display: inline-block;
    flex: none;
    width: 0;
    height: 0;
    margin-left: 7px;
    border-left: 3px solid transparent;
    border-right: 3px solid transparent;
    border-top: 3px solid #555;
}

/* ribbon */
.ribbon {
    flex: none;
    display: flex;
    height: 91px;
    overflow: hidden;
    background: linear-gradient(#fff 45%, #eef0f2);
    border-bottom: 1px solid #8d9094;
}

.group {
    flex: none;
    border-right: 1px solid #d3d6d9;
}

.group-body {
    display: flex;
    height: 65px;
    margin-top: -4px;
}

.group-label {
    padding-top: 9px;
    display: flex;
    align-items: center;
    justify-content: center;
    color: #333;
}

.label-low {
    padding-top: 11px;
}

.label-left {
    justify-content: flex-start;
    padding-left: 13px;
}

.g-select {
    width: 105px;
    padding-left: 11px;
    background: linear-gradient(#8db8e8, #cfe2f6) 0 0 / 2px 65px no-repeat;
}

.g-select .group-label { margin-left: -11px; }

.g-cad {
    width: 194px;
    padding-left: 8px;
}

.g-cad .group-label { margin-left: -10px; }

.g-common {
    width: 275px;
    padding-left: 8px;
}

.g-common .group-label { margin-left: -12px; }

.g-modify {
    width: 239px;
    padding-left: 10px;
}

.g-modify .group-label { margin-left: -10px; }

.g-draw {
    width: 119px;
    padding-left: 6px;
}

.g-draw .group-label { margin-left: -10px; }

.g-recog {
    width: 368px;
    padding-left: 2px;
}

.g-edit {
    width: 232px;
    padding-left: 4px;
}

.g-edit .group-label { margin-left: -2px; }

.col {
    flex: none;
}

.w40 { width: 40px; }
.w50 { width: 50px; }
.w54 { width: 54px; }
.w56 { width: 56px; }
.w66 { width: 66px; }
.w78 { width: 78px; }
.w90 { width: 90px; }
.w100 { width: 100px; }
.w112 { width: 112px; }

.tool {
    display: flex;
    align-items: center;
    height: 23px;
    white-space: nowrap;
}

.tool .ic {
    margin-right: 4px;
}

.off {
    color: #b4b4b4;
}

.big {
    flex: none;
    display: flex;
    flex-direction: column;
    align-items: center;
    white-space: nowrap;
}

.big .arrow {
    margin: 3px 0 0;
}

.big .arrow-low {
    margin-top: 6px;
}

.ic-big {
    flex: none;
    width: 32px;
    height: 32px;
    margin: 4px 0 3px;
}

.small-col {
    margin-left: 2px;
}

/* combo row */
.toolbar {
    flex: none;
    display: flex;
    gap: 7px;
    height: 29px;
    padding-top: 4px;
    background: #c9ccd0;
    border-bottom: 1px solid #8d9094;
}

.combo {
    display: flex;
    align-items: center;
    justify-content: space-between;
    width: 98px;
    height: 22px;
    padding: 0 7px 0 5px;
    background: #fff;
    overflow: hidden;
}

.combo-first {
    width: 61px;
}

.combo-cut {
    margin-left: -37px;
}

/* panels */
.workspace {
    flex: none;
    display: flex;
    height: 803px;
}

.nav {
    flex: none;
    width: 167px;
    display: flex;
    flex-direction: column;
    background: #fff;
    border-right: 1px solid #b8bbbf;
    overflow: hidden;
}

.nav-title {
    height: 21px;
    padding-top: 2px;
    margin-left: -28px;
    background: #e6e8ea;
    border-bottom: 1px solid #c4c7ca;
    color: #555;
}

.nav-tools {
    display: flex;
    justify-content: flex-end;
    gap: 4px;
    height: 30px;
    padding: 3px 3px 0 0;
    background: #f4f5f6;
    border-bottom: 1px solid #ccc;
}

.view-btn {
    display: flex;
    align-items: center;
    justify-content: center;
    width: 25px;
    height: 24px;
    padding: 0;
    background: #eef5fc;
    border: 1px solid #8db8e8;
    border-radius: 3px;
}

.nav-body {
    flex: 1;
    display: flex;
    min-height: 0;
    padding-top: 4px;
}

.nav-list {
    flex: none;
    width: 156px;
    white-space: nowrap;
}

.nav-head {
    height: 24px;
    margin-left: -17px;
    line-height: 24px;
}

.nav-item {
    display: flex;
    align-items: center;
    gap: 6px;
    height: 24px;
    padding-left: 4px;
    color: #333;
}

.nav-item.sel {
    height: 21px;
    margin: 1px 0 2px;
    width: 150px;
    background: #c6d8ef;
}

.nav-scroll {
    flex: none;
    width: 8px;
    height: 722px;
    margin-top: 8px;
    background: #c8c8c8;
    border-radius: 4px;
}

.splitter {
    flex: none;
    width: 4px;
    background: #eceef0;
}

.splitter-dark {
    width: 5px;
    padding-top: 372px;
    background: #fff;
}

.splitter-right {
    background: #e3e5e8;
    padding-top: 372px;
}

.handle {
    height: 100px;
    margin-left: 1px;
    background: #6d7178;
}

.splitter-right .handle {
    margin-left: 0;
}

.middle {
    flex: none;
    width: 286px;
    display: flex;
    flex-direction: column;
    gap: 4px;
    background: #eceef0;
}

.pane {
    display: flex;
    flex-direction: column;
    background: #fff;
    border-left: 1px solid #c0c3c6;
    border-right: 1px solid #c0c3c6;
    overflow: hidden;
}

.pane-list {
    height: 420px;
    border-bottom: 1px solid #c0c3c6;
}

.pane-props {
    height: 379px;
}

.pane-strip {
    flex: none;
    height: 12px;
    padding-right: 3px;
    background: #d9dbde;
    color: #777;
    font-size: 12px;
    line-height: 11px;
    text-align: right;
}

.tabs {
    flex: none;
    display: flex;
    height: 21px;
    background: #eee;
}

.tab {
    width: 65px;
    padding-top: 3px;
    text-align: center;
    background: #dedfe1;
    color: #999;
    border-right: 1px solid #ccc;
    font-weight: 500;
}

.tab.active {
    background: #eee;
    color: #222;
    border-right: 0;
}

.list-tools {
    flex: none;
    display: flex;
    align-items: center;
    height: 31px;
    background: #f0f0f0;
    border-bottom: 1px solid #ccc;
    padding-left: 4px;
    white-space: nowrap;
}

.ltool {
    display: flex;
    align-items: center;
    gap: 4px;
}

.tool-new { width: 69px; gap: 2px; }
.tool-dup { width: 57px; }
.tool-rem { width: 58px; }
.tool-floor { width: 90px; }

.ltool .arrow {
    margin-left: 6px;
}

.more {
    color: #666;
    font-size: 7px;
    letter-spacing: -1px;
}

.search {
    flex: none;
    display: flex;
    align-items: center;
    justify-content: space-between;
    height: 19px;
    padding: 0 4px 0 3px;
    color: #999;
    border-bottom: 1px solid #ccc;
}

.tree-wrap {
    flex: 1;
    display: flex;
    min-height: 0;
}

.tree {
    flex: 1;
    overflow: hidden;
}

.node {
    height: 21px;
    line-height: 21px;
    white-space: nowrap;
}

.n0 { padding-left: 11px; }
.n1 { padding-left: 31px; }
.leaf { padding-left: 63px; }

.node.sel {
    width: 113px;
    margin-left: 60px;
    padding-left: 3px;
    background: #c6d8ef;
}

.tri {
    display: inline-block;
    width: 0;
    height: 0;
    margin-right: 7px;
    border-left: 5px solid transparent;
    border-bottom: 5px solid #444;
}

.tree-scroll {
    flex: none;
    width: 9px;
    padding: 10px 2px 0 0;
}

.tree-thumb {
    width: 7px;
    height: 105px;
    background: #c8c8c8;
    border-radius: 3px;
}

.props-wrap {
    flex: 1;
    display: flex;
    min-height: 0;
}

.props {
    flex: none;
    width: 269px;
}

.prow {
    display: grid;
    grid-template-columns: 22px 100px 147px;
    height: 21px;
    line-height: 23px;
    border-bottom: 1px solid #d8d8d8;
    white-space: nowrap;
}

.pnum {
    text-align: center;
    background: #f0f0f0;
    color: #555;
    font-size: 12px;
    border-right: 1px solid #d8d8d8;
}

.pname {
    padding-left: 31px;
    border-right: 1px solid #d8d8d8;
    overflow: hidden;
    background: linear-gradient(#ccc, #ccc) 8px 10px / 18px 1px no-repeat,
                linear-gradient(#ccc, #ccc) 8px 0 / 1px 100% no-repeat;
}

.pval {
    padding-left: 4px;
    border-right: 1px solid #d8d8d8;
}

.head .pname {
    padding-left: 0;
    text-align: center;
    background: #eee;
    color: #444;
}

.head .pval {
    text-align: center;
    background: #69aef0;
    color: #fff;
    font-weight: 500;
}

.last .pname {
    background: linear-gradient(#ccc, #ccc) 8px 10px / 18px 1px no-repeat,
                linear-gradient(#ccc, #ccc) 8px 0 / 1px 11px no-repeat;
}

.fold .pname {
    display: flex;
    align-items: center;
    gap: 7px;
    padding-left: 3px;
    background: #fff;
}

.fold .pval {
    background: #ebebeb;
}

.box {
    flex: none;
    display: inline-block;
    width: 11px;
    height: 11px;
    border: 1px solid #666;
    border-radius: 2px;
    color: #333;
    font-size: 10px;
    line-height: 9px;
    text-align: center;
    background: #fff;
}

.props-scroll {
    flex: 1;
    display: flex;
    flex-direction: column;
    align-items: center;
    padding-top: 5px;
    padding-right: 2px;
}

.up {
    width: 0;
    height: 0;
    border-left: 4px solid transparent;
    border-right: 4px solid transparent;
    border-bottom: 4px solid #333;
}

.props-thumb {
    width: 7px;
    height: 120px;
    margin-top: 222px;
    background: #c8c8c8;
    border-radius: 3px;
}

/* drawing area */
.canvas {
    flex: none;
    position: relative;
    width: 1130px;
    height: 803px;
    overflow: hidden;
    background: #000;
}

.drawing {
    display: block;
}

.axis-y {
    fill: #2fe040;
    font-size: 12px;
}

.axis-x {
    fill: #f02020;
    font-size: 12px;
}

.cube-label {
    fill: #111;
    font-size: 7px;
}

.view-strip {
    position: absolute;
    left: 1094px;
    top: 3px;
    width: 33px;
    height: 226px;
    display: flex;
    flex-direction: column;
    align-items: center;
    padding-top: 8px;
    background: #9a9ea6;
}

.ic-view {
    flex: none;
    width: 24px;
    height: 24px;
    margin-bottom: 5px;
}

.ic-view.first {
    margin-bottom: 8px;
}

.view-strip .arrow {
    height: 4px;
    margin: 0 0 6px;
    border-top: 4px solid #333;
    border-left-width: 4px;
    border-right-width: 4px;
}

.strip-sep {
    flex: none;
    width: 23px;
    height: 1px;
    margin-bottom: 4px;
    background: #6f7278;
}

.dialog {
    position: absolute;
    left: 27px;
    top: 41px;
    width: 502px;
    height: 277px;
    background: #eee;
}

.dlg-title {
    display: flex;
    align-items: center;
    height: 27px;
    padding: 0 8px;
    background: #2f7fe0;
    color: #dfeeff;
}

.dlg-title span {
    flex: 1;
}

.dlg-btn {
    width: 12px;
    height: 12px;
    margin-left: 16px;
}

.dlg-body {
    position: relative;
    padding: 12px 13px 0 12px;
    height: 250px;
}

.dlg-table {
    height: 228px;
    background: #fff;
    border: 1px solid #bbb;
}

.drow {
    display: grid;
    grid-template-columns: 52px 56px 55px 1fr;
    white-space: nowrap;
}

.dhead {
    height: 25px;
    line-height: 25px;
    background: #eee;
    text-align: center;
    border-bottom: 1px solid #ccc;
}

.dhead .dc {
    border-right: 2px solid #fff;
}

.dhead .c4 {
    border-right: 0;
}

.dsel {
    height: 20px;
    line-height: 20px;
    background: #3d96f0;
    color: #f0f6ff;
}

.dsel .dc {
    padding-left: 3px;
    overflow: hidden;
}

.dsel .c1 {
    display: flex;
    align-items: center;
    gap: 6px;
}

.dsel .c4 {
    padding-left: 4px;
    letter-spacing: 0.17px;
}

.err {
    flex: none;
    width: 16px;
    height: 16px;
}

.grip {
    position: absolute;
    right: 2px;
    bottom: -2px;
    color: #666;
    font-size: 10px;
    line-height: 12px;
}

.tip {
    position: absolute;
    left: 294px;
    top: 505px;
    width: 74px;
    height: 36px;
    padding: 1px 3px;
    background: #ffffe1;
    border: 1px solid #777;
    color: #111;
    line-height: 17px;
    white-space: nowrap;
}

/* right panel */
.display {
    flex: none;
    width: 60px;
    background: #f4f5f6;
    border-left: 1px solid #c0c3c6;
    overflow: hidden;
    white-space: nowrap;
}

.display-title {
    height: 38px;
    padding: 15px 0 0 8px;
    color: #555;
    font-weight: 500;
}

.display-tab {
    height: 25px;
    margin-left: 2px;
    padding: 5px 0 0 7px;
    background: #fff;
    color: #3a7bd5;
    border: 1px solid #d5d7da;
    border-right: 0;
}

.rtable {
    margin: 5px 0 0 3px;
    background: #fff;
    border-left: 1px solid #ccc;
    height: 733px;
    border-bottom: 2px solid #ccc;
    overflow: hidden;
}

.rrow {
    display: flex;
    align-items: center;
    gap: 7px;
    height: 21px;
    padding-top: 1px;
    border-bottom: 1px solid #ddd;
}

.rhead {
    height: 20px;
    padding-left: 41px;
    background: #eee;
}

.l0 {
    padding-left: 2px;
}

.l1 {
    padding-left: 13px;
    background: linear-gradient(#ddd, #ddd) 8px 0 / 1px 100% no-repeat;
}

.l2 {
    padding-left: 40px;
    background: linear-gradient(#ccc, #ccc) 18px 10px / 20px 1px no-repeat,
                linear-gradient(#ccc, #ccc) 18px 0 / 1px 100% no-repeat,
                linear-gradient(#ddd, #ddd) 8px 0 / 1px 100% no-repeat;
}

.l2.end {
    background: linear-gradient(#ccc, #ccc) 18px 10px / 20px 1px no-repeat,
                linear-gradient(#ccc, #ccc) 18px 0 / 1px 11px no-repeat,
                linear-gradient(#ddd, #ddd) 8px 0 / 1px 100% no-repeat;
}

/* freehand marks on top of everything */
.marks {
    position: absolute;
    left: 0;
    top: 0;
    pointer-events: none;
}

.marks path {
    fill: none;
    stroke: #e8221c;
    stroke-width: 3;
    stroke-linecap: round;
    stroke-linejoin: round;
}
```
